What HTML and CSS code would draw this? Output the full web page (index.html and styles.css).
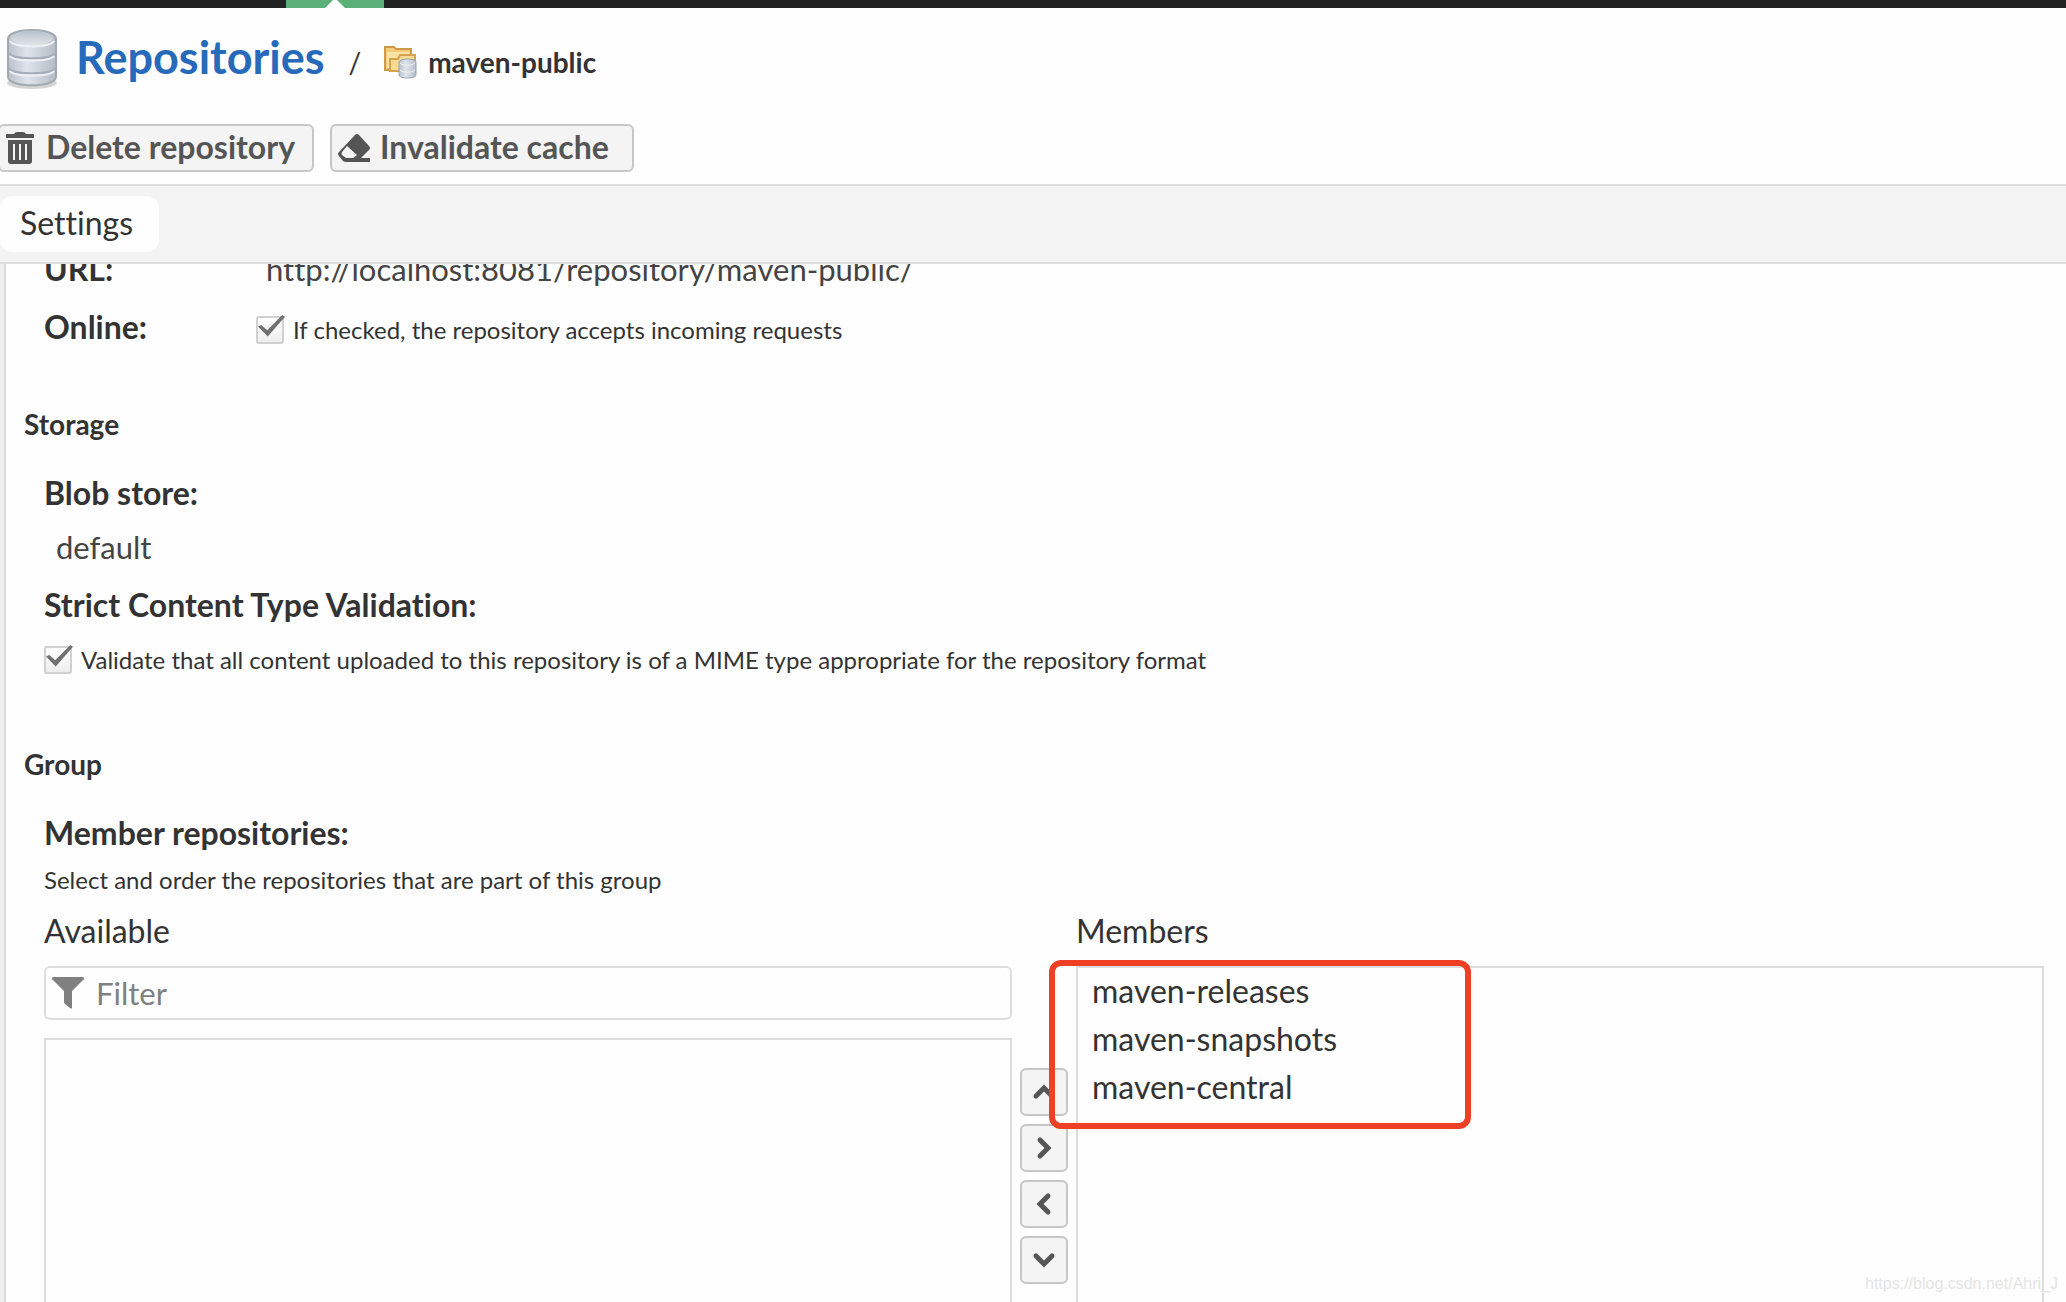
FILE: index.html
```html
<!DOCTYPE html>
<html lang="en">

<head>
  <meta charset="UTF-8">
  <meta name="viewport" content="width=device-width, initial-scale=1.0">
  <title>Repositories / maven-public</title>
  <link rel="stylesheet" href="styles.css">
</head>

<body>
  <div class="topbar">
    <div class="topbar-active"></div>
  </div>

  <header class="header">
    <svg class="db-icon" viewBox="0 0 52 62">
      <defs>
        <linearGradient id="metal" x1="0" x2="1" y1="0" y2="0">
          <stop offset="0" stop-color="#b9c1cb" />
          <stop offset="0.4" stop-color="#dfe4eb" />
          <stop offset="1" stop-color="#b4bcc7" />
        </linearGradient>
        <linearGradient id="lid" x1="0" x2="0" y1="0" y2="1">
          <stop offset="0" stop-color="#b8c2cb" />
          <stop offset="1" stop-color="#e0e4e8" />
        </linearGradient>
      </defs>
      <ellipse cx="26" cy="55" rx="25" ry="6" fill="#777" opacity="0.3" />
      <path d="M2 11C2 -1 50 -1 50 11V49C50 60 2 60 2 49Z" fill="url(#metal)" stroke="#a2a9b1" stroke-width="2" />
      <path d="M3 25C6 32 46 32 49 25M3 40C6 47 46 47 49 40" fill="none" stroke="#a4adb8" stroke-width="2" />
      <path d="M4 28C8 34 44 34 48 28M4 43C8 49 44 49 48 43M4 13C8 20 44 20 48 13" fill="none" stroke="#eef1f5" stroke-width="2" />
      <ellipse cx="26" cy="10" rx="21" ry="7" fill="url(#lid)" />
    </svg>
    <h1><a href="#">Repositories</a></h1>
    <span class="slash">/</span>
    <svg class="folder-icon" viewBox="0 0 34 34">
      <path d="M2 2H11L13 4H28V10H31V25H2Z" fill="#f3cd7c" stroke="#cf9a48" stroke-width="2" />
      <path d="M4 7H26V10H17L15 13H9L7 23H4Z" fill="#fbe3a4" />
      <path d="M7 26V14H15L17 10H32V26Z" fill="#f8da91" stroke="#d6a450" stroke-width="2" />
      <path d="M16 17C16 13 33 13 33 17V30C33 34 16 34 16 30Z" fill="url(#metal)" stroke="#98a4b3" />
      <path d="M17 18C20 21 29 21 32 18M17 25C20 28 29 28 32 25" fill="none" stroke="#f0f3f7" />
    </svg>
    <span class="crumb">maven-public</span>
  </header>

  <div class="actions">
    <button type="button" class="btn btn-delete">
      <svg viewBox="0 0 28 32" width="28" height="32">
        <path d="M0 3Q0 2 1 2H8Q9 0 11 0H17Q19 0 20 2H27Q28 2 28 3V6H0Z" />
        <path fill-rule="evenodd" d="M2 8H26V29Q26 32 23 32H5Q2 32 2 29ZM7 12V28H9V12ZM13 12V28H15V12ZM19 12V28H21V12Z" />
      </svg>
      <span>Delete repository</span>
    </button>
    <button type="button" class="btn btn-cache">
      <svg viewBox="0 0 32 28" width="32" height="28">
        <path fill-rule="evenodd" d="M17 1Q19 -1 21 1L31 12Q33 14 31 16L23 24H32V28H8Q6 28 5 27L1 22Q-1 20 1 18ZM9 12L4 18Q3 20 4 21L8 24H15L19 21Z" />
      </svg>
      <span>Invalidate cache</span>
    </button>
  </div>

  <nav class="tabs">
    <a href="#" class="tab">Settings</a>
  </nav>

  <main class="content">
    <form>
      <div class="row row-url">
        <span class="label">URL:</span>
        <span class="value">http://localhost:8081/repository/maven-public/</span>
      </div>
      <div class="row">
        <span class="label">Online:</span>
        <div class="check">
          <input type="checkbox" id="online" checked>
          <label for="online">If checked, the repository accepts incoming requests</label>
        </div>
      </div>

      <section class="storage">
        <h2>Storage</h2>
        <div class="label">Blob store:</div>
        <div class="value blob">default</div>
        <div class="label">Strict Content Type Validation:</div>
        <div class="check">
          <input type="checkbox" id="strict" checked>
          <label for="strict">Validate that all content uploaded to this repository is of a MIME type appropriate for the repository format</label>
        </div>
      </section>

      <section class="group">
        <h2>Group</h2>
        <div class="label">Member repositories:</div>
        <p class="help">Select and order the repositories that are part of this group</p>

        <div class="selector">
          <div class="column">
            <label for="filter">Available</label>
            <div class="filter">
              <svg viewBox="0 0 32 32" width="32" height="32">
                <path d="M1 0H31Q32 0 32 2L20 14V31Q20 32 18 31L13 27Q12 26 12 25V14L0 2Q0 0 1 0Z" />
              </svg>
              <input type="text" id="filter" placeholder="Filter">
            </div>
            <div class="list available"></div>
          </div>

          <div class="arrows">
            <button type="button" class="btn arrow" aria-label="Move up">
              <svg viewBox="0 0 24 24"><path d="M4 16L12 8L20 16" /></svg>
            </button>
            <button type="button" class="btn arrow" aria-label="Add">
              <svg viewBox="0 0 24 24"><path d="M8 4L16 12L8 20" /></svg>
            </button>
            <button type="button" class="btn arrow" aria-label="Remove">
              <svg viewBox="0 0 24 24"><path d="M16 4L8 12L16 20" /></svg>
            </button>
            <button type="button" class="btn arrow" aria-label="Move down">
              <svg viewBox="0 0 24 24"><path d="M4 8L12 16L20 8" /></svg>
            </button>
          </div>

          <div class="column">
            <span class="column-title">Members</span>
            <div class="list members">
              <ul>
                <li>maven-releases</li>
                <li>maven-snapshots</li>
                <li>maven-central</li>
              </ul>
              <div class="highlight"></div>
            </div>
          </div>
        </div>
      </section>
    </form>
  </main>

  <div class="watermark">https://blog.csdn.net/Ahri_J</div>
</body>

</html>
```

FILE: styles.css
```css
* {
  margin: 0;
  padding: 0;
  box-sizing: border-box;
}

body {
  height: 100vh;
  display: flex;
  flex-direction: column;
  overflow: hidden;
  position: relative;
  background: #fefefe;
  color: #333;
  font-family: Lato, sans-serif;
  font-size: 32px;
  line-height: 38px;
  font-variant-ligatures: none;
}

.topbar {
  height: 8px;
  flex: none;
  background: #222;
}

.topbar-active {
  width: 98px;
  height: 8px;
  margin-left: 286px;
  background: #5ab078;
}

.topbar-active::after {
  content: "";
  display: block;
  width: 20px;
  height: 8px;
  margin: 0 auto;
  background: #fefefe;
  clip-path: polygon(40% 0, 60% 0, 100% 100%, 0 100%);
}

.header {
  display: flex;
  align-items: center;
  height: 116px;
  padding: 0 6px 14px;
  flex: none;
}

.db-icon {
  width: 52px;
  height: 62px;
}

.header h1 {
  margin: 0 0 4px 18px;
  font-size: 45px;
}

.header h1 a {
  color: #286aba;
  text-decoration: none;
}

.slash {
  margin: 6px 22px 0 24px;
  font-size: 28px;
}

.folder-icon {
  width: 34px;
  height: 34px;
  margin-top: 6px;
}

.crumb {
  margin: 6px 0 0 11px;
  font-size: 28px;
  font-weight: bold;
}

.actions {
  display: flex;
  gap: 16px;
  height: 60px;
  flex: none;
}

.btn {
  display: flex;
  align-items: center;
  height: 48px;
  border: 2px solid #c6c6c6;
  border-radius: 6px;
  background: #f4f4f4;
  color: #555;
  font-family: inherit;
  font-size: 32px;
  font-weight: bold;
  cursor: pointer;
}

.btn span {
  padding-bottom: 4px;
}

.btn svg {
  fill: #555;
}

.btn-delete {
  gap: 12px;
  margin-left: -2px;
  padding: 0 17px 0 6px;
}

.btn-cache {
  gap: 10px;
  padding: 0 23px 0 6px;
}

.tabs {
  display: flex;
  align-items: center;
  height: 80px;
  flex: none;
  border-top: 2px solid #ddd;
  border-bottom: 2px solid #ddd;
  background: #f3f3f3;
}

.tab {
  height: 56px;
  padding: 0 26px 0 20px;
  border-radius: 12px;
  background: #fefefe;
  color: #333;
  line-height: 54px;
  text-decoration: none;
}

.content {
  flex: 1;
  min-height: 0;
  margin-left: 4px;
  padding: 0 22px 0 18px;
  overflow: hidden;
  border-left: 2px solid #ddd;
  box-shadow: -4px 0 0 #f0f0f0;
}

.row {
  display: flex;
  align-items: flex-start;
  padding-left: 20px;
}

/* form is scrolled a little under the tab bar */
.row-url {
  margin: -14px 0 20px;
}

.row .label {
  width: 212px;
}

.row .check {
  margin-top: 2px;
}

.row-url .value {
  padding-left: 10px;
}

.label {
  font-weight: bold;
}

.value {
  color: #444;
  font-size: 31px;
}

.check {
  display: flex;
  align-items: center;
  gap: 9px;
  font-size: 24px;
  line-height: 40px;
}

.check input {
  appearance: none;
  position: relative;
  width: 28px;
  height: 28px;
  border: 2px solid #d0d0d0;
  border-radius: 3px;
  background: linear-gradient(#fff, #eee);
}

.check input:checked::after {
  content: "";
  position: absolute;
  inset: -3px -3px 4px 0;
  background: #707070;
  clip-path: polygon(0 50%, 12% 43%, 34% 66%, 90% 0, 100% 8%, 36% 94%);
}

section {
  padding-left: 20px;
}

section h2 {
  margin: 0 0 31px -20px;
  font-size: 28px;
}

.storage {
  margin-top: 55px;
}

.blob {
  margin: 16px 0 20px;
  padding-left: 12px;
}

.storage .check {
  margin-top: 16px;
}

.group {
  margin-top: 65px;
}

.help {
  margin: 8px 0 12px;
  font-size: 24px;
  line-height: 40px;
}

.selector {
  display: grid;
  grid-template-columns: 1fr 64px 1fr;
}

.column {
  display: flex;
  flex-direction: column;
}

.filter {
  display: flex;
  align-items: center;
  gap: 12px;
  height: 54px;
  margin: 16px 0 18px;
  padding: 0 6px;
  border: 2px solid #ddd;
  border-radius: 6px;
}

.filter svg {
  fill: #808080;
}

.filter input {
  flex: 1;
  border: 0;
  outline: none;
  background: none;
  font-family: inherit;
  font-size: 31px;
}

.filter input::placeholder {
  color: #808080;
}

.list {
  border: 2px solid #ddd;
}

.available {
  height: 400px;
}

.arrows {
  display: flex;
  flex-direction: column;
  align-items: center;
  gap: 8px;
  padding-top: 156px;
}

.arrow {
  justify-content: center;
  width: 48px;
}

.arrow svg {
  width: 24px;
  height: 24px;
  fill: none;
  stroke: #555;
  stroke-width: 5;
  stroke-linecap: round;
}

.members {
  position: relative;
  height: 472px;
  margin-top: 16px;
  padding-left: 14px;
}

.members ul {
  list-style: none;
}

.members li {
  padding-bottom: 2px;
  line-height: 46px;
}

.highlight {
  position: absolute;
  top: -8px;
  left: -29px;
  width: 422px;
  height: 169px;
  border: 6px solid #ee4025;
  border-radius: 12px;
}

.watermark {
  position: absolute;
  right: 8px;
  bottom: 6px;
  color: #e4e4e4;
  font-family: "Liberation Sans", sans-serif;
  font-size: 16px;
  line-height: 24px;
}
```
